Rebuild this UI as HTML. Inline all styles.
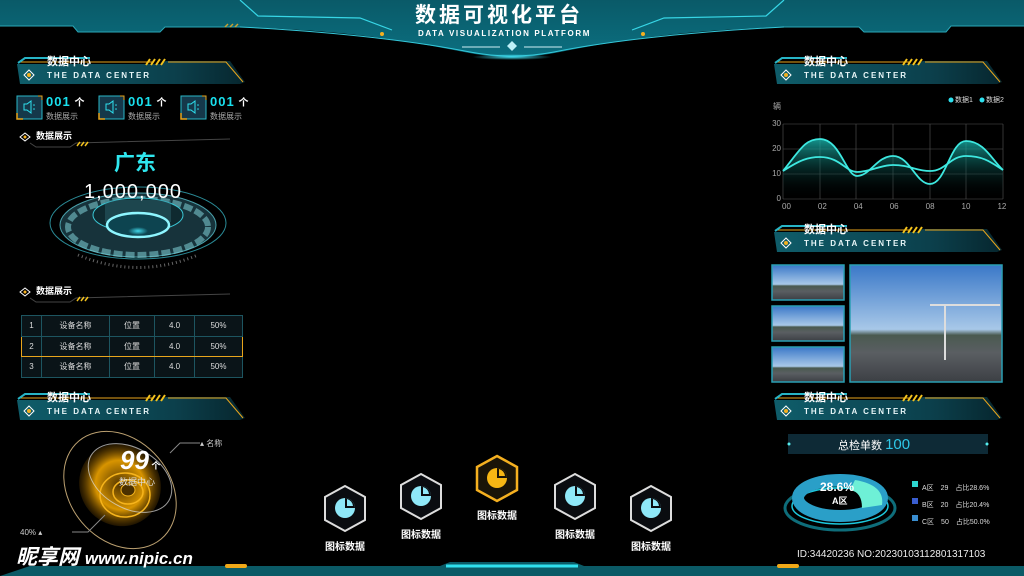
<!DOCTYPE html>
<html><head><meta charset="utf-8"><style>
*{margin:0;padding:0;box-sizing:border-box}
body{width:1024px;height:576px;background:#000;position:relative;overflow:hidden;font-family:"Liberation Sans","Noto Sans CJK SC",sans-serif;color:#fff}
.a{position:absolute;line-height:1}
.tb{position:absolute;width:232px;height:26px}
.tb .cn{position:absolute;left:32px;top:-5px;font-size:11px;font-weight:bold;color:#fff;line-height:1}
.tb .en{position:absolute;left:32px;top:10px;font-size:8px;letter-spacing:2px;color:#e8f6f8;font-weight:bold;line-height:1}
table{border-collapse:collapse;position:absolute;left:21px;top:315px;width:222px;font-size:8px;color:#ddd}
td{border:1px solid #1d5560;height:20.5px;text-align:center;background:#0a1418}
tr.h td{border-top:1px solid #e8a51c;border-bottom:1px solid #e8a51c}
tr.h td:first-child{border-left:1px solid #e8a51c}tr.h td:last-child{border-right:1px solid #e8a51c}
.st{position:absolute;font-size:8px;color:#aaa}
.num{position:absolute;font-size:13px;font-weight:bold;color:#19e0ee;letter-spacing:1px}
.hexl{position:absolute;font-size:10px;font-weight:bold;color:#fff;width:60px;text-align:center}
</style></head><body>
<svg class="a" style="left:0;top:0" width="1024" height="576">
<defs>
<linearGradient id="hd" x1="0" y1="0" x2="0" y2="1"><stop offset="0" stop-color="#0a5a68"/><stop offset="1" stop-color="#0b6f80"/></linearGradient>
<linearGradient id="tbg" x1="0" y1="0" x2="1" y2="0"><stop offset="0" stop-color="#0f5d6a"/><stop offset=".7" stop-color="#0c3f4b"/><stop offset="1" stop-color="#06262e"/></linearGradient>
<linearGradient id="ch" x1="0" y1="0" x2="0" y2="1"><stop offset="0" stop-color="#19b8b0" stop-opacity=".8"/><stop offset="1" stop-color="#000" stop-opacity="0"/></linearGradient>
<radialGradient id="glow"><stop offset="0" stop-color="#3fd8ea"/><stop offset="1" stop-color="#3fd8ea" stop-opacity="0"/></radialGradient>
<radialGradient id="og"><stop offset="0" stop-color="#5a3a00"/><stop offset=".6" stop-color="#f0a500"/><stop offset="1" stop-color="#7a4e00" stop-opacity=".3"/></radialGradient>
<linearGradient id="sky" x1="0" y1="0" x2="0" y2="1"><stop offset="0" stop-color="#3a78c8"/><stop offset=".55" stop-color="#a8c8e8"/><stop offset=".6" stop-color="#4a5a50"/><stop offset=".75" stop-color="#5a5e62"/><stop offset="1" stop-color="#3c3f44"/></linearGradient>
</defs>
<path d="M0,0 H1024 V26 H951 L946,32 H864 L859,27 L784,27 C700,30 640,36 560,52 Q512,62 464,52 C384,36 324,30 240,27 L165,27 L160,32 H78 L73,26 H0Z" fill="url(#hd)"/>
<path d="M240,0 L258,16 L360,18 L392,30" stroke="#37d6e6" fill="none" stroke-width="1.2"/>
<path d="M784,0 L766,16 L664,18 L632,30" stroke="#37d6e6" fill="none" stroke-width="1.2"/>
<path d="M0,26 H73 L78,32 H160 L165,27 H240" stroke="#2aa6b6" fill="none"/>
<path d="M1024,26 H951 L946,32 H864 L859,27 H784" stroke="#2aa6b6" fill="none"/>
<path d="M225,27 l3,-3 M230,27 l3,-3 M235,27 l3,-3" stroke="#c9a030" stroke-width="1.5"/>
<path d="M240,27 C340,32 420,42 470,52 Q512,60 554,52 C604,42 684,32 784,27" stroke="#35c8da" fill="none" stroke-width="1"/>
<ellipse cx="512" cy="57" rx="40" ry="3" fill="url(#glow)"/>
<circle cx="382" cy="34" r="2" fill="#f5b020"/><circle cx="643" cy="34" r="2" fill="#f5b020"/>
<path d="M462,47 H500 M524,47 H562" stroke="#cfeef4" stroke-width="1"/>
<path d="M512,41 L517,46 L512,51 L507,46Z" fill="#bdf0f8"/>
<path d="M0,576 L30,566 H440 L450,562 H574 L584,566 H1024 V576Z" fill="#0b5a66"/>
<path d="M446,566 H578" stroke="#2fe0ee" stroke-width="3"/>
<rect x="225" y="564" width="22" height="4" rx="2" fill="#f0a818"/>
<rect x="777" y="564" width="22" height="4" rx="2" fill="#f0a818"/>
<g id="tb1">
<path d="M17,64 H160 L166,61 H230 L245,82 L240,84 H20Z" fill="url(#tbg)"/>
<path d="M20,62 H152 M168,62 H226 L243,82" stroke="#e8a51c" fill="none" stroke-width="1"/>
<path d="M18,63 L25,58 H90" stroke="#27b4c6" stroke-width="2" fill="none"/>
<path d="M146,65 l4,-6 M151,65 l4,-6 M156,65 l4,-6 M161,65 l4,-6" stroke="#f3c21d" stroke-width="2"/>
<path d="M29,70 l5,5 -5,5 -5,-5z" fill="none" stroke="#fff"/><circle cx="29" cy="75" r="2" fill="#f5b020"/>
</g>
<use href="#tb1" x="0" y="336"/>
<use href="#tb1" x="757" y="0"/>
<use href="#tb1" x="757" y="168"/>
<use href="#tb1" x="757" y="336"/>
<g id="sh"><path d="M20,137 l5,-4 5,4 -5,4z" fill="none" stroke="#fff"/><circle cx="25" cy="137" r="1.5" fill="#f5b020"/>
<path d="M30,143 L36,147 H70 L76,143 L230,139" stroke="#444" fill="none"/>
<path d="M77,146 l3,-4 M81,146 l3,-4 M85,146 l3,-4" stroke="#f3c21d" stroke-width="1.5"/></g>
<use href="#sh" x="0" y="155"/>
<g id="ib"><rect x="17" y="96" width="25" height="23" fill="#15384a" stroke="#2ab7c8"/><path d="M17,113 v6 h6" stroke="#e8a51c" fill="none" stroke-width="1.5"/><path d="M38,96 h4 v4" stroke="#e8a51c" fill="none"/>
<path d="M24,104 h3 l4,-3 v12 l-4,-3 h-3z" fill="none" stroke="#2ee0ee"/><circle cx="34" cy="105" r=".8" fill="#2ee0ee"/><circle cx="34" cy="109" r=".8" fill="#2ee0ee"/></g>
<use href="#ib" x="82"/><use href="#ib" x="164"/>
<ellipse cx="138" cy="223" rx="88" ry="36" fill="none" stroke="#2a8a96" stroke-width="1"/>
<ellipse cx="138" cy="225" rx="78" ry="32" fill="#17333b" stroke="#4aa0aa"/>
<ellipse cx="138" cy="227" rx="70" ry="28" fill="none" stroke="#78c4cc" stroke-width="6" stroke-dasharray="9 3" opacity=".6"/>
<ellipse cx="138" cy="215" rx="45" ry="17" fill="#0f2a30" stroke="#3ac6d4"/>
<rect x="105" y="200" width="66" height="22" fill="#3a7a88" opacity=".35"/>
<ellipse cx="138" cy="225" rx="31" ry="12" fill="#0d4450" stroke="#8ef6ff" stroke-width="2.5"/>
<ellipse cx="138" cy="231" rx="10" ry="4" fill="url(#glow)"/>
<path d="M78,255 Q138,280 198,255" stroke="#666" stroke-dasharray="1 3" fill="none" stroke-width="3"/>
<ellipse cx="120" cy="490" rx="50" ry="64" transform="rotate(-40 120 490)" fill="none" stroke="#bba070" stroke-width="1"/>
<ellipse cx="120" cy="485" rx="40" ry="42" transform="rotate(-40 120 485)" fill="url(#og)" opacity=".9"/>
<ellipse cx="125" cy="495" rx="25" ry="22" fill="none" stroke="#f6b41c" stroke-width="1.5"/>
<ellipse cx="128" cy="492" rx="15" ry="12" fill="none" stroke="#f6b41c" stroke-width="1.5"/>
<ellipse cx="128" cy="490" rx="7" ry="6" fill="#4a3000" stroke="#f6b41c"/>
<ellipse cx="130" cy="478" rx="45" ry="30" transform="rotate(30 130 478)" fill="none" stroke="#ddd" stroke-width="1" opacity=".7"/>
<path d="M170,453 L180,443 H200" stroke="#888" fill="none"/><path d="M72,532 L88,532 L105,515" stroke="#888" fill="none"/>
<g stroke="#555" stroke-width=".6"><path d="M783,124 H1003 M783,149 H1003 M783,174 H1003 M783,199 H1003 M783,124 V199 M820,124 V199 M856,124 V199 M893,124 V199 M930,124 V199 M966,124 V199 M1003,124 V199"/></g>
<path d="M783,171 C800,150 805,139 820,139 C840,139 846,176 857,176 C870,176 877,156 893,156 C910,156 916,184 930,184 C946,184 950,141 966,141 C984,141 992,160 1003,170 V199 H783Z" fill="url(#ch)"/>
<path d="M783,171 C800,150 805,139 820,139 C840,139 846,176 857,176 C870,176 877,156 893,156 C910,156 916,184 930,184 C946,184 950,141 966,141 C984,141 992,160 1003,170" stroke="#3de8e0" fill="none" stroke-width="1.8"/>
<path d="M783,171 C800,160 808,157 820,157 C840,157 846,172 857,172 C870,172 880,165 893,165 C910,165 916,171 930,171 C946,171 950,156 966,156 C984,156 992,163 1003,170" stroke="#3de8e0" fill="none" stroke-width="1.8"/>
<circle cx="951" cy="100" r="2.5" fill="#2de0ee"/><circle cx="982" cy="100" r="2.5" fill="#2de0ee"/>
<rect x="772" y="265" width="72" height="35" fill="url(#sky)" stroke="#2a9fb4" stroke-width="1.5"/>
<rect x="772" y="306" width="72" height="35" fill="url(#sky)" stroke="#2a9fb4" stroke-width="1.5"/>
<rect x="772" y="347" width="72" height="35" fill="url(#sky)" stroke="#2a9fb4" stroke-width="1.5"/>
<rect x="850" y="265" width="152" height="117" fill="url(#sky)" stroke="#2a9fb4" stroke-width="1.5"/>
<path d="M930,305 H1000 M945,305 V360" stroke="#ddd" stroke-width="2"/>
<rect x="788" y="434" width="200" height="20" fill="#0e2a36"/>
<circle cx="789" cy="444" r="1.5" fill="#5ee"/><circle cx="987" cy="444" r="1.5" fill="#5ee"/>
<ellipse cx="840" cy="508" rx="55" ry="22" fill="none" stroke="#0e6d7a" stroke-width="3"/>
<ellipse cx="840" cy="506" rx="48" ry="18" fill="none" stroke="#1cc8dc" stroke-width="1.5"/>
<ellipse cx="840" cy="498" rx="42" ry="18" fill="none" stroke="#2a9fc8" stroke-width="12"/>
<path d="M855,480 Q885,485 882,505 L862,508 Q862,492 850,490Z" fill="#6ef0d6"/>
<rect x="912" y="481" width="6" height="6" fill="#2ed6d0"/><rect x="912" y="498" width="6" height="6" fill="#3a5ed0"/><rect x="912" y="515" width="6" height="6" fill="#3a8ed0"/>
<g id="hx"><path d="M345,486 L365,497 V520 L345,531 L325,520 V497Z" fill="#0a0c10" stroke="#ddd" stroke-width="2"/>
<circle cx="345" cy="508" r="10" fill="#8fe8f8"/><path d="M345,508 V498 A10,10 0 0 1 355,508Z" fill="#0a0c10"/><path d="M347,506 V499 A8,8 0 0 1 353,506Z" fill="#8fe8f8"/></g>
<use href="#hx" x="76" y="-12"/><use href="#hx" x="230" y="-12"/><use href="#hx" x="306" y="0"/>
<path d="M497,456 L517,467 V490 L497,501 L477,490 V467Z" fill="#1a1408" stroke="#f5b020" stroke-width="2.5"/>
<circle cx="497" cy="478" r="10" fill="#f7b614"/><path d="M497,478 V468 A10,10 0 0 1 507,478Z" fill="#1a1408"/><path d="M499,476 V469 A8,8 0 0 1 505,476Z" fill="#f7b614"/>
</svg>
<div class="a" style="left:415px;top:5px;font-size:21px;font-weight:bold;letter-spacing:3px">数据可视化平台</div>
<div class="a" style="left:418px;top:30px;font-size:8px;font-weight:bold;letter-spacing:1.6px">DATA VISUALIZATION PLATFORM</div>
<div class="tb" style="left:15px;top:62px"><div class="cn">数据中心</div><div class="en">THE DATA CENTER</div></div>
<div class="tb" style="left:15px;top:398px"><div class="cn">数据中心</div><div class="en">THE DATA CENTER</div></div>
<div class="tb" style="left:772px;top:62px"><div class="cn">数据中心</div><div class="en">THE DATA CENTER</div></div>
<div class="tb" style="left:772px;top:230px"><div class="cn">数据中心</div><div class="en">THE DATA CENTER</div></div>
<div class="tb" style="left:772px;top:398px"><div class="cn">数据中心</div><div class="en">THE DATA CENTER</div></div>
<div class="num" style="left:46px;top:94px">001<span style="font-size:10px;color:#fff"> 个</span></div>
<div class="num" style="left:128px;top:94px">001<span style="font-size:10px;color:#fff"> 个</span></div>
<div class="num" style="left:210px;top:94px">001<span style="font-size:10px;color:#fff"> 个</span></div>
<div class="st" style="left:46px;top:111px">数据展示</div><div class="st" style="left:128px;top:111px">数据展示</div><div class="st" style="left:210px;top:111px">数据展示</div>
<div class="a" style="left:36px;top:132px;font-size:9px;font-weight:bold">数据展示</div>
<div class="a" style="left:36px;top:287px;font-size:9px;font-weight:bold">数据展示</div>
<div class="a" style="left:114px;top:153px;font-size:21px;font-weight:bold;color:#2fe8f0">广东</div>
<div class="a" style="left:84px;top:182px;font-size:20px;letter-spacing:1px">1,000,000</div>
<table>
<tr><td style="width:20px">1</td><td style="width:68px">设备名称</td><td style="width:45px">位置</td><td style="width:40px">4.0</td><td>50%</td></tr>
<tr class="h"><td>2</td><td>设备名称</td><td>位置</td><td>4.0</td><td>50%</td></tr>
<tr><td>3</td><td>设备名称</td><td>位置</td><td>4.0</td><td>50%</td></tr>
</table>
<div class="a" style="left:120px;top:447px;font-size:26px;font-weight:bold;font-style:italic">99<span style="font-size:9px;font-style:normal"> 个</span></div>
<div class="a" style="left:119px;top:478px;font-size:9px;color:#ddd">数据中心</div>
<div class="a" style="left:200px;top:440px;font-size:8px;color:#ccc">▴ 名称</div>
<div class="a" style="left:20px;top:529px;font-size:8px;color:#ccc">40% ▴</div>
<div class="a" style="left:16px;top:547px;font-size:21px;font-weight:bold;font-style:italic;color:#fff">昵享网 <span style="font-size:17px">www.nipic.cn</span></div>
<div class="hexl" style="left:315px;top:538px">图标数据</div>
<div class="hexl" style="left:391px;top:526px">图标数据</div>
<div class="hexl" style="left:467px;top:507px">图标数据</div>
<div class="hexl" style="left:545px;top:526px">图标数据</div>
<div class="hexl" style="left:621px;top:538px">图标数据</div>
<div class="a" style="left:773px;top:103px;font-size:8px;color:#aaa">辆</div>
<div class="a" style="left:955px;top:97px;font-size:7px;color:#ddd">数据1</div><div class="a" style="left:986px;top:97px;font-size:7px;color:#ddd">数据2</div>
<div class="a" style="left:770px;top:120px;font-size:8px;color:#aaa;text-align:right;width:11px">30</div>
<div class="a" style="left:770px;top:145px;font-size:8px;color:#aaa;text-align:right;width:11px">20</div>
<div class="a" style="left:770px;top:170px;font-size:8px;color:#aaa;text-align:right;width:11px">10</div>
<div class="a" style="left:770px;top:195px;font-size:8px;color:#aaa;text-align:right;width:11px">0</div>
<div class="a" style="left:782px;top:203px;font-size:8px;color:#aaa;width:240px;white-space:nowrap">00<span style="margin-left:27px">02</span><span style="margin-left:27px">04</span><span style="margin-left:27px">06</span><span style="margin-left:27px">08</span><span style="margin-left:27px">10</span><span style="margin-left:27px">12</span></div>
<div class="a" style="left:838px;top:437px;font-size:11px;color:#fff">总检单数 <span style="font-size:15px;color:#2ec8e8">100</span></div>
<div class="a" style="left:820px;top:481px;font-size:12px;font-weight:bold">28.6%</div>
<div class="a" style="left:832px;top:497px;font-size:9px;font-weight:bold">A区</div>
<div class="a" style="left:922px;top:480px;font-size:7px;color:#ddd;line-height:17px">A区　29　占比28.6%<br>B区　20　占比20.4%<br>C区　50　占比50.0%</div>
<div class="a" style="left:797px;top:550px;font-size:10px;color:#eee">ID:34420236 NO:20230103112801317103</div>
</body></html>
